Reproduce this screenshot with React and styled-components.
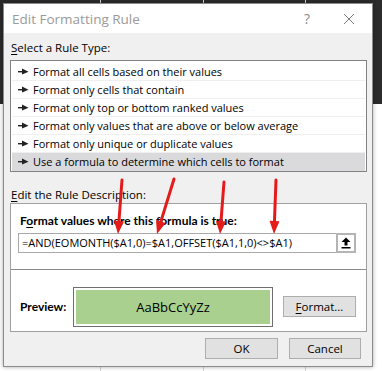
import styled, { createGlobalStyle } from "styled-components";

const Global = createGlobalStyle`
    html, body {
        margin:0;
        padding:0;
    }
    body {
        font-family:"Open Sans", "Noto Sans", sans-serif;
        font-size:11px;
        color:#000;
    }
`
const Screen = styled.div`
    position:relative;
    width:382px;
    height:371px;
    overflow:hidden;
    box-sizing:border-box;
    padding:3px 0 0 3px;
    background:
        linear-gradient(90deg, transparent 0 100px, #d4d4d4 100px 101px, transparent 101px 203px, #d4d4d4 203px 204px, transparent 204px 305px, #d4d4d4 305px 306px, transparent 306px),
        linear-gradient(#2b2b2b 0 104px, #fff 104px);
`
const Dialog = styled.div`
    width:370px;
    height:364px;
    box-sizing:border-box;
    background-color:#f0f0f0;
    border:1px solid #8c8c8c;
    box-shadow:0 0 4px rgba(0,0,0,0.35);
    display:flex;
    flex-direction:column;
`
const TitleBar = styled.div`
    height:29px;
    background-color:#fff;
    display:flex;
    align-items:center;
    padding-left:8px;
    flex-shrink:0;
`
const Title = styled.div`
    flex:1;
    font-size:13.5px;
    color:#9a9a9a;
`
const Help = styled.div`
    width:20px;
    text-align:center;
    font-size:14px;
    color:#8a8a8a;
    margin-right:26px;
`
const Close = styled.svg`
    width:12px;
    height:12px;
    margin-right:17px;
`
const Body = styled.div`
    padding:0 5px 0 6px;
    display:flex;
    flex-direction:column;
`
const Label = styled.div`
    height:14px;
    line-height:14px;
    padding-left:1px;
    font-size:11.5px;
    margin-top:${p => p.$top}px;
    margin-bottom:${p => p.$bottom}px;
`
const U = styled.span`
    text-decoration:underline;
    text-underline-offset:2px;
`
const ListBox = styled.div`
    border:1px solid #828282;
    background-color:#fff;
    padding:2px 1px 0 1px;
`
const Row = styled.div`
    height:18px;
    box-sizing:border-box;
    display:flex;
    align-items:center;
    padding-left:6px;
    gap:4px;
    background-color:${p => (p.$selected ? "#dadadd" : "transparent")};
    border-bottom:1px solid ${p => (p.$selected ? "transparent" : "#efefef")};
`
const Group = styled.div`
    border:1px solid #a0a0a0;
    background-color:#fff;
    display:flex;
    flex-direction:column;
`
const Upper = styled.div`
    height:66px;
    border-bottom:1px solid #8a8a8a;
    padding:10px 10px 0 7px;
    box-sizing:border-box;
`
const Bold = styled.div`
    font-family:Lato, "Open Sans", sans-serif;
    font-weight:700;
    font-size:12px;
    height:14px;
    line-height:14px;
    padding-left:2px;
`
const FormulaRow = styled.div`
    display:flex;
    margin-top:5px;
    height:20px;
`
const Formula = styled.div`
    width:318px;
    box-sizing:border-box;
    border:1px solid #a9a9a9;
    border-right:none;
    line-height:18px;
    padding-left:3px;
    white-space:nowrap;
`
const RefButton = styled.div`
    width:20px;
    box-sizing:border-box;
    border:2px solid #b4b4b4;
    background-color:#fff;
    display:flex;
    align-items:center;
    justify-content:center;
`
const Lower = styled.div`
    height:61px;
    box-sizing:border-box;
    display:flex;
    align-items:center;
    padding:12px 0 0 9px;
`
const PreviewLabel = styled.div`
    font-family:Lato, "Open Sans", sans-serif;
    font-weight:700;
    font-size:12px;
    width:53px;
`
const PreviewBox = styled.div`
    width:200px;
    height:40px;
    box-sizing:border-box;
    border:1px solid #6e6e6e;
    padding:2px;
    background-color:#fff;
`
const PreviewFill = styled.div`
    height:100%;
    background-color:#a9d08e;
    display:flex;
    align-items:center;
    justify-content:center;
    font-size:13px;
`
const Button = styled.div`
    width:${p => p.$w}px;
    height:21px;
    box-sizing:border-box;
    background-color:#e1e1e1;
    border:1px solid #adadad;
    display:flex;
    align-items:center;
    justify-content:center;
    font-size:11.5px;
    margin-left:${p => p.$left}px;
`
const Footer = styled.div`
    display:flex;
    justify-content:flex-end;
    margin-top:6px;
    padding-right:6px;
`
const Overlay = styled.svg`
    position:absolute;
    left:0;
    top:0;
    pointer-events:none;
`

const rules = [
    "Format all cells based on their values",
    "Format only cells that contain",
    "Format only top or bottom ranked values",
    "Format only values that are above or below average",
    "Format only unique or duplicate values",
    "Use a formula to determine which cells to format",
];

const arrows = [
    [122, 180, 118, 234],
    [174, 179, 157, 234],
    [224, 182, 220, 234],
    [276, 180, 274, 234],
];

function Pointer() {
    return (
        <svg width="11" height="7" viewBox="0 0 11 7">
            <rect x="0" y="3" width="6" height="1.4" fill="#222" />
            <polygon points="4,0.5 10.5,3.7 4,6.5" fill="#222" />
        </svg>
    );
}

function RedArrow({ x1, y1, x2, y2 }) {
    const dx = x2 - x1;
    const dy = y2 - y1;
    const len = Math.hypot(dx, dy);
    const ux = dx / len;
    const uy = dy / len;
    const bx = x2 - ux * 13;
    const by = y2 - uy * 13;
    const px = -uy * 5;
    const py = ux * 5;
    return (
        <g>
            <line x1={x1} y1={y1} x2={bx} y2={by} stroke="#e41b1b" strokeWidth="3" strokeLinecap="round" />
            <polygon points={`${x2},${y2} ${bx + px},${by + py} ${bx - px},${by - py}`} fill="#e41b1b" />
        </g>
    );
}

function App() {
    return (
        <Screen>
            <Global />
            <Dialog>
                <TitleBar>
                    <Title>Edit Formatting Rule</Title>
                    <Help>?</Help>
                    <Close viewBox="0 0 12 12">
                        <path d="M1 1 L11 11 M11 1 L1 11" stroke="#7a7a7a" strokeWidth="1" />
                    </Close>
                </TitleBar>
                <Body>
                    <Label $top={8} $bottom={5}><U>S</U>elect a Rule Type:</Label>
                    <ListBox>
                        {rules.map((r, i) => (
                            <Row key={r} $selected={i === rules.length - 1}>
                                <Pointer />
                                {r}
                            </Row>
                        ))}
                    </ListBox>
                    <Label $top={16} $bottom={1}><U>E</U>dit the Rule Description:</Label>
                    <Group>
                        <Upper>
                            <Bold>F<U>o</U>rmat values where this formula is true:</Bold>
                            <FormulaRow>
                                <Formula>=AND(EOMONTH($A1,0)=$A1,OFFSET($A1,1,0)&lt;&gt;$A1)</Formula>
                                <RefButton>
                                    <svg width="10" height="12" viewBox="0 0 10 12">
                                        <path d="M5 0.5 L9.5 5 L6.5 5 L6.5 8.5 L3.5 8.5 L3.5 5 L0.5 5 Z" fill="#000" />
                                        <rect x="0.5" y="10" width="9" height="1.5" fill="#000" />
                                    </svg>
                                </RefButton>
                            </FormulaRow>
                        </Upper>
                        <Lower>
                            <PreviewLabel>Preview:</PreviewLabel>
                            <PreviewBox>
                                <PreviewFill>AaBbCcYyZz</PreviewFill>
                            </PreviewBox>
                            <Button $w={73} $left={10}><U>F</U>ormat...</Button>
                        </Lower>
                    </Group>
                    <Footer>
                        <Button $w={73} $left={0}>OK</Button>
                        <Button $w={72} $left={11}>Cancel</Button>
                    </Footer>
                </Body>
            </Dialog>
            <Overlay width="382" height="371">
                {arrows.map(([x1, y1, x2, y2]) => (
                    <RedArrow key={x1} x1={x1} y1={y1} x2={x2} y2={y2} />
                ))}
            </Overlay>
        </Screen>
    );
}

export default App;
